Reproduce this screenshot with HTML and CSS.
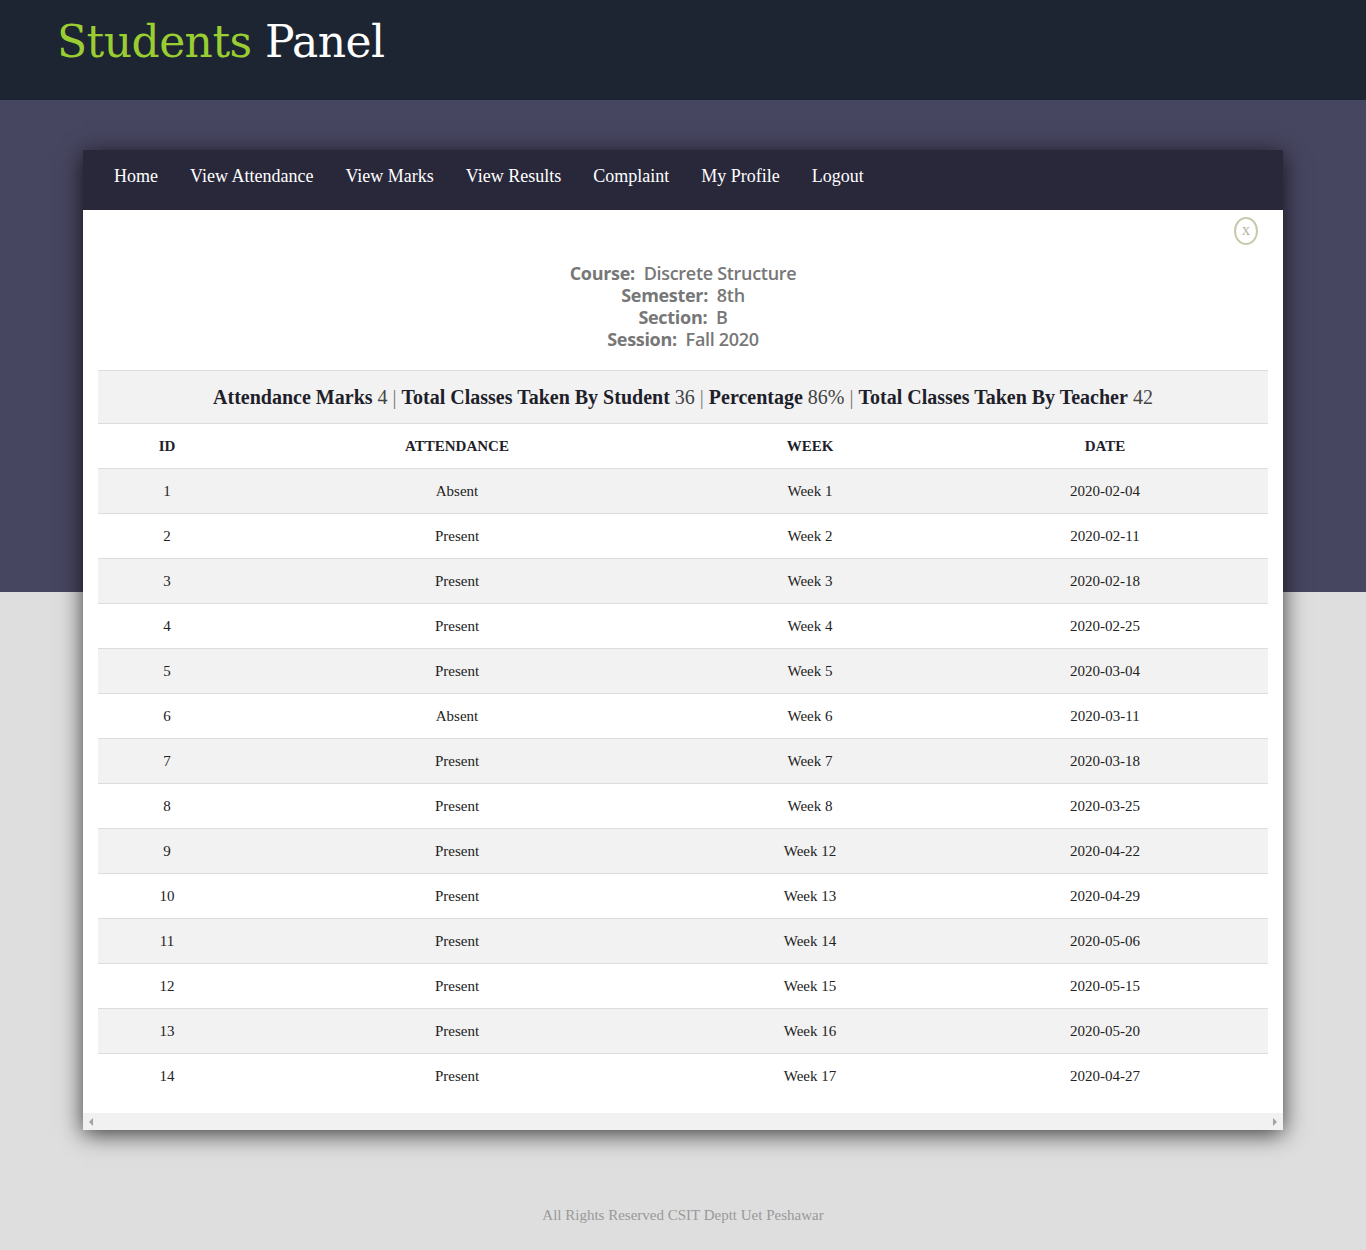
FILE: index.html
```html
<!DOCTYPE html>
<html>
<head>
<meta charset="utf-8">
<link rel="stylesheet" href="styles.css">
</head>
<body>
<header class="top">
  <h1 class="brand"><span class="brand-green">Students</span> Panel</h1>
</header>
<div class="band">
  <div class="card">
    <nav class="nav">
      <a>Home</a>
      <a>View Attendance</a>
      <a>View Marks</a>
      <a>View Results</a>
      <a>Complaint</a>
      <a>My Profile</a>
      <a>Logout</a>
    </nav>
    <div class="content">
      <div class="close-row"><span class="close">x</span></div>
      <div class="info">
        <div><b>Course:</b>&nbsp; Discrete Structure</div>
        <div><b>Semester:</b>&nbsp; 8th</div>
        <div><b>Section:</b>&nbsp; B</div>
        <div><b>Session:</b>&nbsp; Fall 2020</div>
      </div>
      <div class="summary">
        <b>Attendance Marks</b> 4 <span class="sep">|</span> <b>Total Classes Taken By Student</b> 36 <span class="sep">|</span> <b>Percentage</b> 86% <span class="sep">|</span> <b>Total Classes Taken By Teacher</b> 42
      </div>
      <table class="att">
        <colgroup>
          <col class="c1"><col class="c2"><col class="c3"><col class="c4">
        </colgroup>
        <thead>
          <tr><th>ID</th><th>ATTENDANCE</th><th>WEEK</th><th>DATE</th></tr>
        </thead>
        <tbody>
          <tr><td>1</td><td>Absent</td><td>Week 1</td><td>2020-02-04</td></tr>
          <tr><td>2</td><td>Present</td><td>Week 2</td><td>2020-02-11</td></tr>
          <tr><td>3</td><td>Present</td><td>Week 3</td><td>2020-02-18</td></tr>
          <tr><td>4</td><td>Present</td><td>Week 4</td><td>2020-02-25</td></tr>
          <tr><td>5</td><td>Present</td><td>Week 5</td><td>2020-03-04</td></tr>
          <tr><td>6</td><td>Absent</td><td>Week 6</td><td>2020-03-11</td></tr>
          <tr><td>7</td><td>Present</td><td>Week 7</td><td>2020-03-18</td></tr>
          <tr><td>8</td><td>Present</td><td>Week 8</td><td>2020-03-25</td></tr>
          <tr><td>9</td><td>Present</td><td>Week 12</td><td>2020-04-22</td></tr>
          <tr><td>10</td><td>Present</td><td>Week 13</td><td>2020-04-29</td></tr>
          <tr><td>11</td><td>Present</td><td>Week 14</td><td>2020-05-06</td></tr>
          <tr><td>12</td><td>Present</td><td>Week 15</td><td>2020-05-15</td></tr>
          <tr><td>13</td><td>Present</td><td>Week 16</td><td>2020-05-20</td></tr>
          <tr class="last"><td>14</td><td>Present</td><td>Week 17</td><td>2020-04-27</td></tr>
        </tbody>
      </table>
    </div>
    <div class="hscroll"><span class="arrow-l"></span><span class="arrow-r"></span></div>
  </div>
</div>
<footer class="foot">All Rights Reserved CSIT Deptt Uet Peshawar</footer>
</body>
</html>
```
FILE: styles.css
```css
html, body {
  margin: 0;
  padding: 0;
}
body {
  background: #dedede;
  font-family: "Liberation Serif", "Times New Roman", serif;
  color: #222;
  min-height: 1250px;
}
.top {
  background: #1c2531;
  height: 100px;
  box-sizing: border-box;
  padding-left: 57px;
  padding-top: 14px;
}
.brand {
  margin: 0;
  font-family: "DejaVu Serif", serif;
  font-weight: normal;
  font-size: 44px;
  line-height: 56px;
  color: #ffffff;
  letter-spacing: -0.55px;
}
.brand-green {
  color: #9acd32;
}
.band {
  background: linear-gradient(#474660 0, #474660 492px, #dedede 492px);
  padding-top: 50px;
  display: flex;
  justify-content: center;
}
.card {
  width: 1200px;
  background: #fff;
  box-shadow: 0 4px 22px rgba(0, 0, 0, 0.75);
}
.nav {
  background: #29283a;
  height: 60px;
  box-sizing: border-box;
  display: flex;
  align-items: center;
  padding-left: 15px;
  padding-bottom: 8px;
}
.nav a {
  color: #fff;
  font-size: 18px;
  padding: 0 16px;
}
.content {
  padding: 0 15px;
  background: #fff;
}
.close-row {
  display: flex;
  justify-content: flex-end;
  padding-top: 7px;
  padding-right: 10px;
  height: 28px;
}
.close {
  width: 20px;
  height: 24px;
  border: 2px solid #c9c9ad;
  border-radius: 50%;
  color: #b8b8a0;
  font-size: 17px;
  line-height: 22px;
  text-align: center;
  font-family: "Liberation Serif", serif;
}
.info {
  text-align: center;
  font-family: "Open Sans", "Noto Sans", sans-serif;
  font-size: 18px;
  line-height: 22px;
  color: #777;
  font-weight: 600;
  padding-top: 17px;
  padding-bottom: 20px;
  letter-spacing: -0.3px;
}
.info b {
  font-weight: 700;
}
.summary {
  background: #f2f2f2;
  border-top: 1px solid #dddddd;
  border-bottom: 1px solid #dddddd;
  height: 54px;
  line-height: 52px;
  text-align: center;
  font-size: 20px;
  color: #444;
  box-sizing: border-box;
}
.summary b {
  color: #1f1f2b;
}
.sep {
  color: #777;
}
.att {
  width: 100%;
  border-collapse: collapse;
  font-size: 15px;
}
.c1 { width: 138px; }
.c2 { width: 442px; }
.c3 { width: 264px; }
.c4 { width: 326px; }
.att th, .att td {
  text-align: center;
  padding: 0;
  height: 44px;
  border-bottom: 1px solid #dddddd;
}
.att th {
  font-weight: bold;
  color: #1f1f2b;
}
.att tbody tr:nth-child(odd) {
  background: #f2f2f2;
}
.att tr.last td {
  border-bottom: none;
  height: 44px;
}
.att tbody {
  border-bottom: 15px solid #fff;
}
.hscroll {
  height: 17px;
  background: #f1f1f1;
  position: relative;
}
.arrow-l, .arrow-r {
  position: absolute;
  top: 5px;
  width: 0;
  height: 0;
  border-top: 4px solid transparent;
  border-bottom: 4px solid transparent;
}
.arrow-l {
  left: 6px;
  border-right: 4px solid #a3a3a3;
}
.arrow-r {
  right: 6px;
  border-left: 4px solid #a3a3a3;
}
.foot {
  text-align: center;
  color: #999;
  font-size: 15px;
  padding-top: 77px;
}
```
